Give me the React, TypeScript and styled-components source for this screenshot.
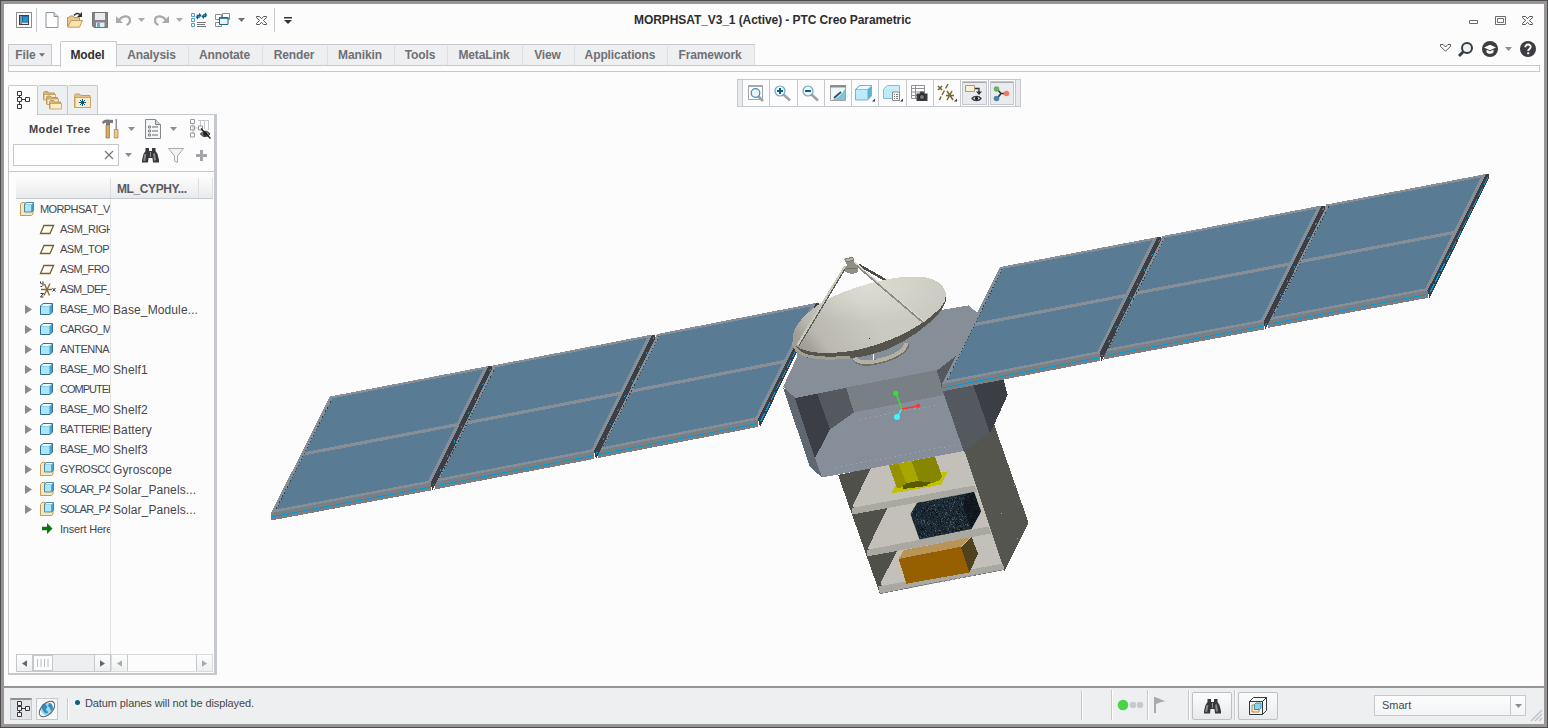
import React from 'react';
import styled, { createGlobalStyle, css } from 'styled-components';

const GlobalStyle = createGlobalStyle`
  *, *::before, *::after { box-sizing: border-box; }
  body {
    margin: 0;
    background: #fcfcfc;
    font-family: "Liberation Sans", Arial, sans-serif;
    font-size: 12px;
    color: #45474c;
  }
  svg { display: block; flex: none; overflow: visible; }
`;

const LINE = '#c5c9cd';

const Outer = styled.div`
  width: 1548px;
  height: 728px;
  padding: 1px;
  background: #4f4c4d;
`;
const Frame = styled.div`
  width: 100%;
  height: 100%;
  border: 3px solid #989596;
  background: #fcfcfc;
  display: flex;
  flex-direction: column;
`;

/* ---------- title bar ---------- */
const TitleBar = styled.header`
  height: 32px;
  flex: none;
  display: flex;
  align-items: center;
`;
const QuickAccess = styled.div`
  width: 630px;
  display: flex;
  align-items: center;
`;
const Spot = styled.span<{ $gap?: number; $up?: number }>`
  display: inline-flex;
  flex: none;
  margin-left: ${p => p.$gap ?? 0}px;
  margin-bottom: ${p => p.$up ?? 0}px;
`;
const Divider = styled.span<{ $gap?: number; $h?: number }>`
  flex: none;
  width: 1px;
  height: ${p => p.$h ?? 24}px;
  margin-left: ${p => p.$gap ?? 0}px;
  background: ${LINE};
`;
const Title = styled.h1`
  margin: 0;
  flex: 1;
  font-size: 12px;
  line-height: 16px;
  font-weight: bold;
  letter-spacing: -0.08px;
  color: #2d2d30;
  white-space: nowrap;
`;
const WindowButtons = styled.div`
  display: flex;
  align-items: center;
  gap: 16px;
  margin-right: 11px;
`;

/* ---------- ribbon ---------- */
const RibbonTabs = styled.nav`
  height: 30px;
  flex: none;
  display: flex;
  align-items: flex-end;
  padding: 0 0 0 4px;
`;
const tabBase = css`
  display: flex;
  align-items: center;
  justify-content: center;
  font-weight: bold;
  letter-spacing: -0.1px;
  color: #707075;
  white-space: nowrap;
`;
const FileTab = styled.div`
  ${tabBase}
  width: 44px;
  height: 22px;
  gap: 3px;
  padding-bottom: 1px;
  border: 1px solid ${LINE};
  border-bottom: 0;
  background: #eeeff1;
`;
const ActiveTab = styled.div`
  ${tabBase}
  width: 57px;
  height: 26px;
  margin: 0 0 -1px 8px;
  padding: 0 2px 0 0;
  border: 1px solid ${LINE};
  border-bottom: 0;
  border-radius: 2px 2px 0 0;
  background: #fcfcfc;
  color: #2f2f33;
  z-index: 1;
`;
const Tab = styled.div<{ $w: number }>`
  ${tabBase}
  width: ${p => p.$w}px;
  height: 22px;
  padding: 0 2px 1px 0;
  border-top: 1px solid ${LINE};
  border-right: 1px solid #dddfe2;
  background: #eeeff1;
  &:last-of-type { border-right-color: ${LINE}; }
`;
const RibbonTools = styled.div`
  margin-left: auto;
  margin-right: 8px;
  height: 34px;
  display: flex;
  align-items: center;
`;
const RibbonBody = styled.div`
  height: 7px;
  flex: none;
  margin: -1px 4px 0;
  border: 1px solid ${LINE};
`;

/* ---------- workspace ---------- */
const Workspace = styled.main`
  flex: 1;
  min-height: 0;
  display: flex;
`;
const Sidebar = styled.aside`
  width: 213px;
  flex: none;
  display: flex;
  flex-direction: column;
  padding: 13px 0 11px 4px;
`;
const SideTabs = styled.div`
  display: flex;
  height: 30px;
  flex: none;
  z-index: 1;
`;
const SideTab = styled.div<{ $active?: boolean }>`
  width: 30px;
  height: ${p => (p.$active ? 30 : 29)}px;
  padding-bottom: ${p => (p.$active ? 2 : 0)}px;
  border: 1px solid ${LINE};
  border-bottom: 0;
  border-left-width: ${p => (p.$active ? 1 : 0)}px;
  border-radius: 2px 2px 0 0;
  background: ${p => (p.$active ? '#fcfcfc' : '#eeeff1')};
  display: flex;
  align-items: center;
  justify-content: center;
`;
const TreePanel = styled.section`
  flex: 1;
  margin-top: -1px;
  border: 1px solid ${LINE};
  border-right-width: 3px;
  border-bottom-width: 2px;
  display: flex;
  flex-direction: column;
`;
const TreeTools = styled.div`
  height: 28px;
  display: flex;
  align-items: center;
`;
const TreeTitle = styled.span`
  width: 73px;
  margin-left: 20px;
  font-weight: bold;
  font-size: 11px;
  letter-spacing: 0.4px;
  white-space: nowrap;
  color: #404247;
`;
const SearchRow = styled.div`
  height: 29px;
  display: flex;
  align-items: center;
  padding: 0 0 4px 4px;
  border-bottom: 1px solid ${LINE};
`;
const SearchBox = styled.div`
  width: 106px;
  height: 22px;
  border: 1px solid ${LINE};
  background: #fff;
  display: flex;
  align-items: center;
  justify-content: flex-end;
  padding-right: 5px;
`;
const Grid = styled.div`
  flex: 1;
  margin: 6px 1px 0 7px;
  display: flex;
  flex-direction: column;
`;
const GridHead = styled.div`
  height: 21px;
  display: grid;
  grid-template-columns: 95px 88px 1fr;
  grid-template-rows: 20px;
  background: linear-gradient(#fcfcfc, #e9eaed);
  border-bottom: 1px solid ${LINE};
`;
const HeadCell = styled.div`
  border-right: 1px solid #dcdfe1;
  padding-left: 6px;
  font-weight: bold;
  line-height: 23px;
  letter-spacing: -0.4px;
  color: #595b61;
`;
const Rows = styled.div`
  flex: 1;
  background: linear-gradient(to right, transparent 94px, #e3e5e7 94px, #e3e5e7 95px, transparent 95px);
`;
const Row = styled.div`
  height: 20px;
  display: grid;
  grid-template-columns: 94px 1fr;
  grid-template-rows: 20px;
`;
const NameCell = styled.div<{ $root?: boolean }>`
  display: flex;
  align-items: center;
  overflow: hidden;
  font-size: 11px;
  white-space: nowrap;
  padding-left: ${p => (p.$root ? 4 : 9)}px;
`;
const Expander = styled.span`
  width: 15px;
  flex: none;
`;
const NodeIcon = styled.span`
  width: 20px;
  flex: none;
`;
const NodeName = styled.span<{ $spacing?: number }>`
  letter-spacing: ${p => p.$spacing ?? -0.5}px;
  font-kerning: none;
`;
const ParamCell = styled.div`
  padding-left: 3px;
  line-height: 22px;
  letter-spacing: 0.12px;
  white-space: nowrap;
`;
const ScrollBars = styled.div`
  height: 18px;
  display: flex;
  margin-bottom: 1px;
`;
const ScrollBar = styled.div<{ $w: number; $filled?: boolean }>`
  width: ${p => p.$w}px;
  border: 1px solid ${p => (p.$filled ? LINE : '#d9dcdf')};
  background: ${p => (p.$filled ? '#eeeff1' : '#fcfcfc')};
  display: flex;
  justify-content: space-between;
`;
const ScrollEnd = styled.span<{ $side: 'l' | 'r' }>`
  width: 16px;
  background: linear-gradient(#fdfdfd, #eeeff1);
  border: 0 solid ${LINE};
  border-right-width: ${p => (p.$side === 'l' ? 1 : 0)}px;
  border-left-width: ${p => (p.$side === 'r' ? 1 : 0)}px;
  display: flex;
  align-items: center;
  justify-content: center;
`;
const Thumb = styled.span`
  width: 20px;
  margin-right: auto;
  background: #fcfcfc;
  border: 1px solid ${LINE};
  display: flex;
  align-items: center;
  justify-content: center;
`;

const Viewport = styled.section`
  position: relative;
  flex: 1;
  overflow: hidden;
`;
const ViewToolbar = styled.div`
  position: absolute;
  left: 520px;
  top: 7px;
  width: 284px;
  height: 28px;
  border: 1px solid ${LINE};
  background: #fcfcfc;
  display: flex;
`;
const Grip = styled.span`
  width: 5px;
  background: #e8eaee;
  border-right: 1px solid ${LINE};
  &:last-child { border-right: 0; width: 4px; }
`;
const ViewButton = styled.span<{ $pressed?: boolean }>`
  flex: 1;
  padding-right: 1px;
  border-right: 1px solid ${LINE};
  display: flex;
  align-items: center;
  justify-content: center;
  ${p => p.$pressed && css`
    background: #e9ebef;
    box-shadow: inset 0 0 0 1px #fcfcfc, inset 0 0 0 2px ${LINE}, inset 0 3px 0 0 #a8a9ac;
  `}
`;

/* ---------- status bar ---------- */
const StatusBar = styled.footer`
  height: 38px;
  flex: none;
  border-top: 2px solid #989596;
  background: #eeeff1;
  display: flex;
  align-items: flex-start;
`;
const ToggleButton = styled.span<{ $down?: boolean; $gap: number }>`
  width: 22px;
  height: 22px;
  margin: 10px 0 0 ${p => p.$gap}px;
  padding: ${p => (p.$down ? '0 0 2px 4px' : '0 0 1px')};
  border: 1px solid ${LINE};
  border-top: ${p => (p.$down ? '2px solid #8f9093' : `1px solid ${LINE}`)};
  background: ${p => (p.$down ? '#e2e4e8' : '#f6f7f8')};
  display: flex;
  align-items: center;
  justify-content: center;
`;
const StatusRule = styled.span<{ $gap: number; $top?: number; $h?: number }>`
  width: 2px;
  height: ${p => p.$h ?? 30}px;
  margin: ${p => p.$top ?? 2}px 0 0 ${p => p.$gap}px;
  border-left: 1px solid ${LINE};
  background: #fff;
  flex: none;
`;
const Message = styled.div`
  display: flex;
  width: 1006px;
  margin: 8px 0 0 5px;
  font-size: 11px;
  line-height: 15px;
  letter-spacing: -0.1px;
  white-space: nowrap;
`;
const Bullet = styled.span`
  width: 5px;
  height: 5px;
  margin: 4px 5px 0 1px;
  border-radius: 50%;
  background: #0d5e82;
`;
const StatusSpot = styled.span<{ $gap: number; $top: number }>`
  margin: ${p => p.$top}px 0 0 ${p => p.$gap}px;
`;
const StatusButton = styled.span<{ $gap: number }>`
  width: 40px;
  height: 28px;
  flex: none;
  margin: 4px 0 0 ${p => p.$gap}px;
  border: 1px solid #bcc0c5;
  border-radius: 2px;
  background: linear-gradient(#fcfcfc, #e8eaed);
  display: flex;
  align-items: center;
  justify-content: center;
`;
const Select = styled.div`
  width: 152px;
  height: 21px;
  flex: none;
  margin: 7px 0 0 96px;
  border: 1px solid ${LINE};
  background: linear-gradient(#fdfdfd, #f3f4f5);
  display: flex;
  font-size: 11px;
  line-height: 19px;
  padding-left: 7px;
  justify-content: space-between;
`;
const SelectArrow = styled.span`
  width: 15px;
  border-left: 1px solid ${LINE};
  display: flex;
  align-items: center;
  justify-content: center;
`;

/* ---------- icons ---------- */
const Caret = ({ c = '#8d8d90', w = 7 }: { c?: string; w?: number }) => (
  <svg width={w} height="4" viewBox="0 0 8 4.5"><path d="M0 0h8L4 4.5z" fill={c} /></svg>
);
const AppIcon = () => (
  <svg width="16" height="16" shapeRendering="crispEdges">
    <path d="M.5.5h15v15H.5z" fill="#fff" stroke="#8c8c90" />
    <path d="M3 3h10v10H3z" fill="#3c3e42" />
    <path d="M4 4h8v8H4z" fill="#dfe3e8" />
    <path d="M4 4h2v8H4z" fill="#8b9197" />
    <path d="M6 4h6v6H6z" fill="#1597dc" stroke="#24597e" strokeWidth=".6" />
  </svg>
);
const NewIcon = () => (
  <svg width="14" height="16"><path d="M1 .5h8l4 4v11H1z" fill="#fff" stroke="#8b949e" /><path d="M9 .5v4h4" fill="#d3dae2" stroke="#8b949e" /></svg>
);
const OpenIcon = () => (
  <svg width="16" height="16">
    <path d="M.5 14.500V5.500h1.500l1-1.500h3l1 1.500h5.500V9" fill="#e9c990" stroke="#bd9650" />
    <path d="M.8 15.200L4 8.500h11.500l-3 6.700z" fill="#fbe3b0" stroke="#c39b58" />
    <path d="M7 3.500C9 .8 11 1 13 2.500" fill="none" stroke="#333" strokeWidth="1.500" /><path d="M15 0v5h-5z" fill="#333" />
  </svg>
);
const SaveIcon = () => (
  <svg width="16" height="16">
    <path d="M.5.500h15v15H2l-1.500-1.500z" fill="#848488" stroke="#737377" /><path d="M3 1h10v7H3z" fill="#e9ebed" />
    <path d="M4 10.500h8.500V15H4z" fill="#e4eef5" /><path d="M5 11h3v4H5z" fill="#5fb1d8" />
  </svg>
);
const UndoIcon = ({ flip }: { flip?: boolean }) => (
  <svg width="16" height="12"><g transform={flip ? 'matrix(-1 0 0 1 16 0)' : undefined}>
    <path d="M3 6C7 1 14 1 14 6.500c0 2-1 3.500-3.500 4.500" fill="none" stroke="#a9a9ac" strokeWidth="2.200" />
    <path d="M0 2v7h7z" fill="#a9a9ac" />
  </g></svg>
);
const RegenIcon = () => (
  <svg width="16" height="16" fill="none">
    <path d="M.500 1.500h3v3h-3zM.500 6.500h3v3h-3zM.500 11.500h3v3h-3z" stroke="#4ba3cb" />
    <path d="M6 10.500h9M6 12.500h8M6 14.500h9" stroke="#77777b" strokeWidth="1" />
    <path d="M6.500 5.500v-2h2M14.500 2.500v2h-2" stroke="#105f83" strokeWidth="1.600" />
    <path d="M8 .800v5.400l2.600-2.700zM13 1.800v5.400l-2.600-2.700zM4.500 4.500h4L6.500 7.500zM12.500 3.500h4L14.500 .5z" fill="#105f83" />
  </svg>
);
const WindowsIcon = () => (
  <svg width="16" height="15" fill="#fff" stroke="#8a8c90">
    <path d="M7.500.500h7v6h-7zM.500 1.500h6v5h-6zM.500 9.500h6v4h-6z" /><path d="M4.500 4.500h8.500v7H4.500z" fill="#e6f3fa" stroke="#1c6a8c" /><path d="M4 4h9.500v1.800H4z" fill="#1c6a8c" stroke="none" />
  </svg>
);
const CrossIcon = ({ w = 11 }: { w?: number }) => (
  <svg width={w} height="9" viewBox="0 0 11 9">
    <path d="M.500.500h3l2 2.200 2-2.200h3v1.200L7.300 4.500l3.200 2.800v1.200h-3l-2-2.200-2 2.200h-3V7.300l3.200-2.800L.500 1.700z" fill="#fff" stroke="#55565a" />
  </svg>
);
const MinIcon = () => <Spot $up={-4}><svg width="10" height="4"><path d="M.500.500h8v3h-8z" fill="#fff" stroke="#6a6b6f" /></svg></Spot>;
const MaxIcon = () => <svg width="11" height="9" fill="#fff" stroke="#6a6b6f"><path d="M.500.500h10v8h-10z" /><path d="M2.500 2.500h6v4h-6z" /></svg>;
const CollapseIcon = () => <svg width="11" height="8"><path d="M.500.500h2.500l2.500 2.500L8 .500h2.500v1.800l-5 5-5-5z" fill="#fff" stroke="#55565a" /></svg>;
const FindIcon = () => (
  <svg width="15" height="15"><circle cx="9" cy="6" r="5" fill="#e8f2f7" stroke="#3a3b3e" strokeWidth="2" /><path d="M1 14l4.500-4.500" stroke="#3a3b3e" strokeWidth="2.800" /></svg>
);
const LearnIcon = () => (
  <svg width="16" height="16"><circle cx="8" cy="8" r="8" fill="#3c3d40" /><path d="M2 6.500l6-2.700 6 2.700-6 2.700z" fill="#fcfcfc" /><path d="M4.500 8.800v2.400c1.500 2 5.500 2 7 0V8.800L8 10.300z" fill="#fcfcfc" /></svg>
);
const HelpIcon = () => (
  <svg width="16" height="16"><circle cx="8" cy="8" r="8" fill="#3c3d40" /><path d="M5.300 6.200c0-3.700 5.600-3.400 5.400-.2C10.600 8 8.200 7.800 8.200 10" fill="none" stroke="#fff" strokeWidth="1.900" /><path d="M7.200 11.300h2v2h-2z" fill="#fff" /></svg>
);
const TreeIcon = ({ c = '#37383c', fill = '#fcfcfc', h = 18 }) => (
  <svg width="13" height={h} fill={fill} stroke={c}>
    <path d={`M2.500 4v${h - 8}M5 ${Math.floor(h / 2) - 0.5}h4`} />
    <path d={`M.500.500h4v4h-4zM.500 ${Math.floor(h / 2) - 2.5}h4v4h-4zM.500 ${h - 4.5}h4v4h-4zM8.500 ${Math.floor(h / 2) - 2.5}h4v4h-4z`} />
  </svg>
);
const folder = (x: number, y: number) => (
  <g transform={`translate(${x} ${y})`}><path d="M.500 8.500v-7l1-1h3l1 1.500h6v6.500z" fill="#d9b778" stroke="#b18a4b" strokeWidth=".8" /><path d="M1 3.500h11.500v5.500H1z" fill="#faebc9" stroke="#c19a5a" strokeWidth=".8" /></g>
);
const FoldersIcon = () => <svg width="19" height="19">{folder(0, 0)}{folder(3, 4.500)}{folder(6, 9)}</svg>;
const FavIcon = () => (
  <svg width="17" height="15"><path d="M.500 14.500v-12l1-1.500h4l1.500 1.500h9v12z" fill="#e0c28a" stroke="#c19a5a" /><path d="M1 4.500h15.500v10H1z" fill="#faebc9" stroke="#c9a567" /><path d="M8.500 6v7M5 9.500h7M6 7l5 5M11 7l-5 5" stroke="#0d5e82" /></svg>
);
const ToolsIcon = () => (
  <svg width="17" height="20">
    <path d="M0 3c2-3 5-3 11-2v3H8V6H4V3.500L1 5z" fill="#77797d" /><path d="M4 6h3.500v13H4z" fill="#dba861" stroke="#9c7132" strokeWidth=".7" />
    <path d="M13.500 0h1.500v10h-1.500z" fill="#8f9196" /><path d="M12.300 10.500h3.700v8.500h-3.700z" fill="#efc98b" stroke="#a67a3b" strokeWidth=".7" />
  </svg>
);
const SettingsIcon = () => (
  <svg width="17" height="20"><path d="M.500.500h10l5 5v14H.500z" fill="#f4f7f9" stroke="#83888e" /><path d="M10.500.500v5h5" fill="#cdd5dc" stroke="#83888e" /><path d="M7 8h6M7 12h6M7 16h6" stroke="#68696d" /><path d="M3.500 7h2v2h-2zM3.500 11h2v2h-2zM3.500 15h2v2h-2z" fill="none" stroke="#68696d" strokeWidth=".8" /></svg>
);
const HideIcon = () => (
  <svg width="21" height="20" fill="none">
    <path d="M3 4v11M5 9h4M8 1.500h11M10.500 2v5M14.500 2v8M18.500 2v9" stroke="#c8c9cc" /><path d="M.500.500h4v4h-4zM.500 7h4v4h-4zM.500 14h4v4h-4zM8.500 7h4v4h-4z" stroke="#98999d" />
    <path d="M10.500 15c2.500-3.700 7-3.700 9.500 0-2.500 3.500-7 3.500-9.500 0z" fill="#77797d" stroke="#37383c" /><circle cx="15" cy="15" r="2" fill="#28282b" /><path d="M11 9.500l9.500 10" stroke="#161618" strokeWidth="1.200" />
  </svg>
);
const Binoculars = () => (
  <svg width="17" height="15">
    <path d="M3.500 0h3.500v3h3V0h3.500v3l2 3 1.500 6v2.500h-6L10.500 10h-4L6 14.500H0V12l1.500-6 2-3z" fill="#36373a" />
    <path d="M3.400 6l-1.200 7" stroke="#85878b" strokeWidth="2" /><path d="M12 5.500l1 7" stroke="#85878b" strokeWidth="2" /><path d="M8.500 4v5" stroke="#909296" />
  </svg>
);
const FilterIcon = () => <svg width="16" height="15"><path d="M.500.500h15L9.500 8v6.500L6.500 13V8z" fill="#f1f2f3" stroke="#aaabae" /></svg>;
const PlusIcon = () => <svg width="11" height="11"><path d="M5.500 0v11M0 5.500h11" stroke="#a3a4a7" strokeWidth="3" /></svg>;
const ClearIcon = () => <svg width="8" height="8"><path d="M0 0l8 8M8 0L0 8" stroke="#77787c" strokeWidth="1.200" /></svg>;
const Cube = ({ s = 13 }: { s?: number }) => (
  <svg width={s} height={s - 1} viewBox="0 0 13 12">
    <path d="M.500 3l2.500-2.500h9.500V9L10 11.500H.500z" fill="#3fa5d2" stroke="#38718d" /><path d="M1 3.300h8.500V11H1z" fill="#abe5fa" /><path d="M1.200 3l2.200-2h8.500l-2.200 2z" fill="#eaf9ff" />
  </svg>
);
const Assembly = () => (
  <svg width="14" height="14" viewBox="0 0 14 14">
    <path d="M.500 2.500l1.500-2h3v8.500h8v3l-1.500 1.500h-11z" fill="#fae6bd" stroke="#c29b5c" />
    <path d="M4.500 2.500l1.500-2h7.500v8l-2 1.500h-7z" fill="#3d9bc6" stroke="#387c9d" strokeWidth=".8" /><path d="M5 2.800h6.200v6.700H5z" fill="#abe5fa" /><path d="M5 2.500L6.500 1H13l-1.500 1.500z" fill="#eaf9ff" />
  </svg>
);
const Plane = () => <svg width="15" height="9"><path d="M4 .500h9.500l-3.500 8H.500z" fill="#fffdf6" stroke="#775e2c" strokeWidth="1.300" /></svg>;
const Csys = () => (
  <svg width="17" height="17" fill="none"><path d="M1 8.500h11M4.500 3l5 11.500M10 2.500L4 14.500" stroke="#836836" strokeWidth="1.300" /><path d="M.500.500v1.500l1 1h1M3 .500v4l-1 1H.500M12.500 7l3 3.500M15.500 7l-3 3.500M.500 12.500h3l-3 3.500h3" stroke="#333" /></svg>
);
const InsertArrow = () => <svg width="11" height="11"><path d="M0 3.800h5V0l5.500 5.500L5 11V7.200H0z" fill="#0e7410" /></svg>;
const Tri = ({ dir, s = 7, c = '#8a8a8d' }: { dir: 'l' | 'r'; s?: number; c?: string }) => (
  <svg width={s} height={s + 2} viewBox="0 0 7 9"><path d={dir === 'r' ? 'M0 0v9l7-4.500z' : 'M7 0v9L0 4.500z'} fill={c} /></svg>
);
const ThumbLines = () => <svg width="12" height="8"><path d="M.500 0v8M4 0v8M7.500 0v8M11 0v8" stroke="#bcbec1" /></svg>;

const Zoom = ({ sign }: { sign?: string }) => (
  <svg width="17" height="17"><path d="M9.500 9.500l6.500 6" stroke="#9fa2a7" strokeWidth="2.600" /><circle cx="6" cy="6" r="5" fill="#eef8fd" stroke="#6aa6c3" strokeWidth="1.200" />{sign && <path d={sign} stroke="#0d5e82" strokeWidth="2" />}</svg>
);
const Refit = () => (
  <svg width="17" height="17"><path d="M1.500.500h14v14h-14z" fill="#fff" stroke="#a3a5a9" /><path d="M1 0h15v2H1z" fill="#a8a9ac" /><path d="M11 11l5 5" stroke="#9fa2a7" strokeWidth="2.600" /><circle cx="8.500" cy="8" r="4.300" fill="#e7f5fb" stroke="#468dad" strokeWidth="1.300" /></svg>
);
const Repaint = () => (
  <svg width="16" height="16"><path d="M.500.500h15v15H.500z" fill="#eef8fc" stroke="#a3a5a9" /><path d="M0 0h16v2.500H0z" fill="#8a8c90" /><path d="M15 4v11H2C9 13 12 8 15 4z" fill="#7cc3e0" /><path d="M4 13l7-6" stroke="#354d5b" strokeWidth="1.800" /></svg>
);
const Corner = () => <path d="M20 14.500v3h-3z" fill="#3a3b3e" />;
const DisplayStyle = () => (
  <svg width="19" height="18"><path d="M.500 5.500l4-4h12v10.500l-4 4H.500z" fill="#5fb1d4" stroke="#74b4d0" /><path d="M1 6h11.500v9.500H1z" fill="#bcebfb" /><path d="M1.500 5.200L4.800 2h11.400l-3.600 3.200z" fill="#eefaff" /><Corner /></svg>
);
const SavedViews = () => (
  <svg width="19" height="18"><path d="M.500 5l4-3.500h12v8l-4 5H.500z" fill="#cdeefa" stroke="#86bcd2" /><path d="M1 5h11.500v9H1z" fill="#bcebfb" /><path d="M9.500 8h7v8.500h-7z" fill="#f7f7f7" stroke="#86888c" /><path d="M11 10.500h1M13 10.500h2M11 12.500h1M13 12.500h2M11 14.500h1M13 14.500h2" stroke="#77797d" /><Corner /></svg>
);
const ViewManager = () => (
  <svg width="17" height="17" fill="none"><path d="M.500.500h13v13H.500zM.500 3.500h13M.500 7h13M.500 10.500h13M4.500 0v14" stroke="#909296" /><path d="M5.500 8.500h3l1-2h3l1 2h3v7.500h-11z" fill="#3a3b3e" /><circle cx="11" cy="12" r="2.600" fill="#77797d" stroke="#1f2022" /></svg>
);
const DatumFilter = () => (
  <svg width="19" height="18" stroke="#7c642f" strokeWidth="1.500"><path d="M1 2l4 4M5 2L1 6M11 0L8.500 4.500M7.500 6.500L5 11M4 12.500L2.500 16M9 11.500h8M10 7l6 9M15 7l-5 9" /><path d="M20 14.500v3h-3z" fill="#3a3b3e" stroke="none" /></svg>
);
const Annotations = () => (
  <svg width="18" height="17"><path d="M.500.500h9v6h-9z" fill="#faf1d2" stroke="#a89c78" /><path d="M10 3.500h4v5" fill="none" stroke="#333" strokeWidth="1.300" /><path d="M11 6.500h6l-3 3.500z" fill="#333" /><path d="M7 13.500c2-2.800 7-2.800 9 0-2 2.700-7 2.700-9 0z" fill="#fff" stroke="#3a3b3e" strokeWidth="1.300" /><circle cx="11.500" cy="13.500" r="1.700" fill="#222" /></svg>
);
const SpinCenter = () => (
  <svg width="17" height="17"><path d="M3.500 3.500L8 8.500l-4 5M8 8.500h5" fill="none" stroke="#333" strokeWidth="1.600" /><circle cx="3.500" cy="4" r="2.800" fill="#6cae68" /><circle cx="3.500" cy="13.500" r="2.800" fill="#4a83ac" /><circle cx="13.500" cy="8.500" r="2.800" fill="#ee7a6e" /></svg>
);
const Globe = () => (
  <svg width="18" height="18"><circle cx="9" cy="9" r="6.500" fill="#9bd7f0" /><path d="M4 5c3-3 4 0 5 1s-1 3-1 4 2 1 2 2-2 2-3 1-4-4-3-8zM11 3c3 0 4 3 4 6l-2 2-1-3-2-2z" fill="#2f8fc4" /><ellipse cx="9" cy="9" rx="9.500" ry="5.500" transform="rotate(-45 9 9)" fill="none" stroke="#606368" strokeWidth="1" /></svg>
);
const Flag = () => <svg width="12" height="16"><path d="M1 0v16" stroke="#a9aaad" strokeWidth="2" /><path d="M1 .500c4 0 6 3 11 3.500-4 1-7 1-11 4z" fill="#a9aaad" /></svg>;
const Lights = () => (
  <svg width="26" height="12"><circle cx="6" cy="6" r="5.300" fill="#4bd348" /><circle cx="16" cy="6" r="3.200" fill="#c9cacc" /><circle cx="23" cy="6" r="3.200" fill="#c9cacc" /></svg>
);
const BoxSelect = () => (
  <svg width="18" height="18" fill="none"><path d="M.500 4.500l4-4h13v13l-4 4H.500zM.500 4.500h13v13M13.500 4.500l4-4" stroke="#36373a" /><path d="M3 8h2.500v4.500h4.500V15H3z" fill="#fae6bd" stroke="#bb8e41" /><path d="M5.500 7.500l1.500-1.500h5v5l-1.500 1.500h-5z" fill="#8ed3ef" stroke="#418fb1" /></svg>
);
const ResizeGrip = () => <svg width="12" height="12"><path d="M1 12L12 1M5 12l7-7M9 12l3-3" stroke="#bfc1c4" strokeWidth="1.300" /></svg>;

/* ---------- 3D model drawing ---------- */
type Pt = [number, number];
type Quad = { tl: Pt; tr: Pt; br: Pt; bl: Pt };
const mix = (a: Pt, b: Pt, t: number): Pt => [a[0] + (b[0] - a[0]) * t, a[1] + (b[1] - a[1]) * t];
const pts = (...p: Pt[]) => p.map(q => q.join(',')).join(' ');

function SolarPanel({ tl, tr, br, bl, outer }: Quad & { outer?: boolean }) {
  const at = (u: number, v: number) => mix(mix(tl, tr, u), mix(bl, br, u), v);
  const cell = (v0: number, v1: number) => pts(at(0.024, v0), at(0.976, v0), at(0.976, v1), at(0.024, v1));
  const down = (p: Pt, dy: number, dx = 0): Pt => [p[0] + dx, p[1] + dy];
  return (
    <g>
      <polygon points={pts(tr, down(tr, 0, 3), down(tr, 4, 3), down(br, 7.5, 2), br)} fill="#3b3e44" />
      <polyline
        points={pts(down(tr, 3, 2), down(br, 4, 1.5))}
        stroke="#0799d2"
        strokeDasharray={outer ? '9 3' : '2 14'}
        fill="none"
      />
      <polygon points={pts(bl, br, down(br, 7.5), down(bl, 7.5))} fill="#788085" />
      <polygon points={pts(tl, tr, br, bl)} fill="#868e97" />
      <polyline points={pts(down(bl, 4), down(br, 4))} stroke="#0799d2" fill="none" strokeWidth="1" />
      <polygon points={cell(0.022, 0.482)} fill="#5a7b94" />
      <polygon points={cell(0.513, 0.976)} fill="#5a7b94" />
      <polyline points={pts(at(0.022, 0.022), at(0.022, 0.972))} stroke="#34414e" strokeDasharray="1.200 2.200" fill="none" />
    </g>
  );
}

const leftWing: Quad[] = [
  { tl: [657, 334], tr: [816, 303], br: [758, 419.500], bl: [598, 450.500] },
  { tl: [493, 365.500], tr: [652, 334.500], br: [594, 451.500], bl: [434.500, 482] },
  { tl: [330, 396.500], tr: [488.500, 366], br: [430.500, 483], bl: [271, 513] },
];
const rightWing: Quad[] = [
  { tl: [1326.500, 204.500], tr: [1486, 174], br: [1427.500, 290.500], bl: [1267.500, 320.500] },
  { tl: [1162.500, 236], tr: [1321.500, 205.500], br: [1263.500, 322], bl: [1103.500, 352] },
  { tl: [1000, 267], tr: [1157.500, 237], br: [1099.500, 353.500], bl: [942, 384] },
];

const grain = (() => {
  let seed = 7;
  const rnd = () => ((seed = (seed * 16807) % 2147483647) / 2147483647);
  const tones = ['#33424f', '#0c141b', '#293b49', '#4a5864', '#0a0f14', '#20323f'];
  return Array.from({ length: 1500 }, () => ({ x: 910 + Math.floor(rnd() * 72), y: 491 + Math.floor(rnd() * 50), c: tones[Math.floor(rnd() * 6)] }));
})();

const Satellite = () => (
  <svg width="1327" height="614" viewBox="217 72 1327 614" shapeRendering="crispEdges">
    <defs>
      <linearGradient id="dish" x1="0" y1="0.700" x2="1" y2="0.300">
        <stop offset="0" stopColor="#a19f95" /><stop offset=".12" stopColor="#bbb9af" /><stop offset=".5" stopColor="#cbcac0" /><stop offset="1" stopColor="#cccbc1" />
      </linearGradient>
      <radialGradient id="shine" cx=".5" cy=".12" r=".5"><stop offset="0" stopColor="#deddd3" /><stop offset="1" stopColor="#deddd3" stopOpacity="0" /></radialGradient>
      <clipPath id="computer"><polygon points="917,503 974,492 981,511.500 971.500,529 919.500,539.500 910.500,514" /></clipPath>
    </defs>
    {leftWing.map((p, i) => <SolarPanel key={i} outer={i === 0} {...p} />)}

    {/* equipment bay */}
    <polygon points="838,475 964,450 1004.500,569 880,594" fill="#c2c0b8" />
    <polygon points="964,450 990,432 994,424 1028.500,522.500 1004.500,570.500" fill="#54554e" />
    <g fill="#4f504a">
      <polygon points="838,475 871,468 851.500,508" /><polygon points="852,514 887.500,507.500 866.500,551" /><polygon points="867,556 897,551 878.500,587" />
      <polygon points="838,475 880,594 882,586 842,475" />
    </g>
    <g fill="#a9a8a1">
      <polygon points="851.500,508 974,485.500 977,491.500 852.500,514.500" /><polygon points="866.500,550 988.500,526.500 991,533.500 867,556.500" /><polygon points="878.500,586.500 1003,563.500 1004.500,570 880,594" />
    </g>
    <path d="M880 593.500L1004 569.500" stroke="#74787a" strokeDasharray="3 2" />
    <path d="M1013.500 485.500h1M1000.500 513.500h1M1016.500 538.500h1" stroke="#a9a8a1" />

    {/* gyroscope */}
    <polygon points="891.500,493.500 941,484.700 947.700,471.300 940,473 896,484" fill="#c3c200" />
    <polygon points="889,465.500 899,463 907,483.500 903,487 897,488.500" fill="#969100" />
    <polygon points="898.500,463.500 912,461 919,481.500 906.500,484" fill="#a8a700" />
    <polygon points="911.500,461 935,456.500 942,476 940,480 931,483.500 919,481.500" fill="#878600" />
    <polygon points="902.500,486 907,483 917,481 931,482.500 926.500,486 903.500,489" fill="#5c5a00" />

    {/* flight computer */}
    <g clipPath="url(#computer)">
      <path d="M909 490h74v51h-74z" fill="#1b2731" />
      {grain.map((g, i) => <rect key={i} x={g.x} y={g.y} width="1" height="1" fill={g.c} />)}
      <polygon points="966,494 974,492 981,511.500 971.500,529 963,507" fill="#0a1016" opacity=".65" />
    </g>

    {/* battery */}
    <polygon points="898.500,559 904,550 970.500,537.300 961,547" fill="#b89456" />
    <polygon points="898.500,559 961,546.700 969.500,572.500 906.500,583.700" fill="#965f00" />
    <polygon points="961,547 971.700,537.300 978,553.500 969.500,572.500" fill="#51421f" />

    {/* base module */}
    <polygon points="783,387 797,357 800,336 941,310 969,305.300 990,325 952,360 937,371 795,398" fill="#868e97" />
    <polygon points="782.700,387 795,397.500 822,477.500 810,467" fill="#5f6871" />
    <polygon points="795,398 817.500,393.500 830,429.500 815,458" fill="#3b3e44" />
    <polygon points="817.300,393.700 846,388 854.500,412.500 830,429.500" fill="#54585f" />
    <polygon points="846,387.500 937,370 945,396 854,413" fill="#788085" />
    <polygon points="936.700,370.700 956,356 950,386 942,387" fill="#54585f" />
    <polygon points="854,412.300 944,395 964,451 822,477.500 815,458 830,429.500" fill="#868e99" />
    <polygon points="941,386 973,383 990,433 963.500,451" fill="#54585f" />
    <polygon points="972.500,383 1003,378 1007.700,394.700 994,425 990,433" fill="#3b3e44" />
    <path d="M860 419.500L938 404.500M836 467.500L958 444.500" stroke="#a3abb2" strokeDasharray="1 4" />

    {rightWing.map((p, i) => <SolarPanel key={i} outer={i === 0} {...p} />)}

    {/* antenna */}
    <path d="M854 357c3 8 16 7 27 4 12-3 25-9 26-17" fill="none" stroke="#6f6c63" strokeWidth="5" />
    <path d="M854 357c3 7 16 6 27 3 12-3 25-9 25-17" fill="none" stroke="#b3b0a5" strokeWidth="4" />
    <path d="M873.500 353v7" stroke="#fff" /><path d="M873.500 359.500h2" stroke="#0799d2" />
    <path d="M859 265l28 16" stroke="#4b4b44" strokeWidth="2.500" />
    <path d="M792.500 338c0 12 6 17 15 19.500 14 3 40 2 60-2 24-5 46-19 61-32 12-10 19-19 18-31z" fill="#54544c" />
    <path d="M793 342c2 9 8 13 17 14.500 10 2 26 2 40 .5" fill="none" stroke="#a19e92" strokeWidth="3" />
    <path d="M793 341c-4-14 19-37 48-48 23-9 42-14 62-16 23-2 40 2 43 17 1 10-9 18-22 28-18 12-42 23-67 28-24 5-60 5-64-9z" fill="url(#dish)" />
    <path d="M793 341c-4-14 19-37 48-48 23-9 42-14 62-16 23-2 40 2 43 17 1 10-9 18-22 28-18 12-42 23-67 28-24 5-60 5-64-9z" fill="url(#shine)" />
    <path d="M846 266L798.500 345" stroke="#5d5b52" strokeWidth="2.600" /><path d="M845 266L797.500 345" stroke="#cbc9be" strokeWidth="2" />
    <path d="M854 263L923 322" stroke="#8d8b81" strokeWidth="2.400" /><path d="M854.500 262L923.500 321" stroke="#dad8ce" strokeWidth="1.300" />
    <path d="M844.500 258.500l8-2 2 5-1 2 4.500 3.500v5l-6 2-7-2v-5l2-2z" fill="#918f85" /><path d="M844.500 259l8-2 1.500 3-8 2zM846 268l11 1" fill="#b8b5aa" stroke="#6b695f" strokeWidth=".7" />
    <path d="M869 338.500h1" stroke="#333" />

    {/* spin center */}
    <g shapeRendering="auto" strokeWidth="1.400">
      <path d="M901.700 409L896 393.500" stroke="#2ee62e" /><circle cx="895.700" cy="393.300" r="2.500" fill="#2ee62e" />
      <path d="M901.700 409l16.500-3" stroke="#ff3232" /><circle cx="918.300" cy="405.800" r="2" fill="#ff3232" />
      <path d="M901.700 409L897 417" stroke="#3cf7fb" /><circle cx="897" cy="417" r="3" fill="#3cf7fb" />
    </g>
  </svg>
);

/* ---------- data ---------- */
const tabs: [string, number][] = [
  ['Analysis', 72], ['Annotate', 74], ['Render', 65], ['Manikin', 67], ['Tools', 53], ['MetaLink', 75], ['View', 52], ['Applications', 93], ['Framework', 87],
];
type Kind = 'asm' | 'plane' | 'csys' | 'part' | 'insert';
const nodes: { name: string; kind: Kind; param?: string; open?: boolean; spacing?: number }[] = [
  { name: 'ASM_RIGH', kind: 'plane' },
  { name: 'ASM_TOP', kind: 'plane' },
  { name: 'ASM_FRO', kind: 'plane', spacing: -0.6 },
  { name: 'ASM_DEF_', kind: 'csys', spacing: -0.8 },
  { name: 'BASE_MO', kind: 'part', param: 'Base_Module...', open: true, spacing: -0.55 },
  { name: 'CARGO_M', kind: 'part', open: true, spacing: -0.6 },
  { name: 'ANTENNA', kind: 'part', open: true },
  { name: 'BASE_MO', kind: 'part', param: 'Shelf1', open: true, spacing: -0.55 },
  { name: 'COMPUTER', kind: 'part', open: true, spacing: -1 },
  { name: 'BASE_MO', kind: 'part', param: 'Shelf2', open: true, spacing: -0.55 },
  { name: 'BATTERIES', kind: 'part', param: 'Battery', open: true, spacing: -0.75 },
  { name: 'BASE_MO', kind: 'part', param: 'Shelf3', open: true, spacing: -0.55 },
  { name: 'GYROSCO', kind: 'asm', param: 'Gyroscope', open: true },
  { name: 'SOLAR_PA', kind: 'asm', param: 'Solar_Panels...', open: true, spacing: -0.8 },
  { name: 'SOLAR_PA', kind: 'asm', param: 'Solar_Panels...', open: true, spacing: -0.8 },
  { name: 'Insert Here', kind: 'insert', spacing: -0.2 },
];
const kindIcon: Record<Kind, React.ReactNode> = { asm: <Assembly />, plane: <Plane />, csys: <Csys />, part: <Cube />, insert: <Spot $gap={2}><InsertArrow /></Spot> };

export default function App() {
  return (
    <Outer>
      <GlobalStyle />
      <Frame>
        <TitleBar>
          <QuickAccess>
            <Spot $gap={12}><AppIcon /></Spot>
            <Divider $gap={4} />
            <Spot $gap={8}><NewIcon /></Spot>
            <Spot $gap={8}><OpenIcon /></Spot>
            <Spot $gap={9}><SaveIcon /></Spot>
            <Spot $gap={8}><UndoIcon /></Spot>
            <Spot $gap={6}><Caret c="#a9a9ac" /></Spot>
            <Spot $gap={8}><UndoIcon flip /></Spot>
            <Spot $gap={7}><Caret c="#a9a9ac" /></Spot>
            <Spot $gap={8}><RegenIcon /></Spot>
            <Spot $gap={8}><WindowsIcon /></Spot>
            <Spot $gap={7}><Caret c="#6f6f73" /></Spot>
            <Spot $gap={11}><CrossIcon /></Spot>
            <Divider $gap={7} />
            <Spot $gap={9}>
              <svg width="8" height="7"><path d="M0 0h8v1.500H0zM0 3h8L4 7z" fill="#333" /></svg>
            </Spot>
          </QuickAccess>
          <Title>MORPHSAT_V3_1 (Active) - PTC Creo Parametric</Title>
          <WindowButtons><MinIcon /><MaxIcon /><CrossIcon /></WindowButtons>
        </TitleBar>
        <RibbonTabs>
          <FileTab>File <Caret c="#6f6f73" w={6} /></FileTab>
          <ActiveTab>Model</ActiveTab>
          {tabs.map(([name, w]) => <Tab key={name} $w={w}>{name}</Tab>)}
          <RibbonTools>
            <Spot $up={2}><CollapseIcon /></Spot>
            <Spot $gap={7}><FindIcon /></Spot>
            <Spot $gap={9}><LearnIcon /></Spot>
            <Spot $gap={7}><Caret /></Spot>
            <Spot $gap={8}><HelpIcon /></Spot>
          </RibbonTools>
        </RibbonTabs>
        <RibbonBody />
        <Workspace>
          <Sidebar>
            <SideTabs>
              <SideTab $active><TreeIcon /></SideTab>
              <SideTab><FoldersIcon /></SideTab>
              <SideTab><FavIcon /></SideTab>
            </SideTabs>
            <TreePanel>
              <TreeTools>
                <TreeTitle>Model Tree</TreeTitle>
                <Spot><ToolsIcon /></Spot>
                <Spot $gap={9}><Caret /></Spot>
                <Spot $gap={10}><SettingsIcon /></Spot>
                <Spot $gap={8}><Caret /></Spot>
                <Spot $gap={13}><HideIcon /></Spot>
              </TreeTools>
              <SearchRow>
                <SearchBox><ClearIcon /></SearchBox>
                <Spot $gap={6}><Caret /></Spot>
                <Spot $gap={10}><Binoculars /></Spot>
                <Spot $gap={9}><FilterIcon /></Spot>
                <Spot $gap={12}><PlusIcon /></Spot>
              </SearchRow>
              <Grid>
                <GridHead><HeadCell /><HeadCell>ML_CYPHY...</HeadCell><HeadCell /></GridHead>
                <Rows>
                  <Row>
                    <NameCell $root><NodeIcon><Assembly /></NodeIcon><NodeName $spacing={-0.6}>MORPHSAT_V</NodeName></NameCell>
                  </Row>
                  {nodes.map((n, i) => (
                    <Row key={i}>
                      <NameCell>
                        <Expander>{n.open && <Tri dir="r" />}</Expander>
                        <NodeIcon>{kindIcon[n.kind]}</NodeIcon>
                        <NodeName $spacing={n.spacing}>{n.name}</NodeName>
                      </NameCell>
                      <ParamCell>{n.param}</ParamCell>
                    </Row>
                  ))}
                </Rows>
                <ScrollBars>
                  <ScrollBar $w={95} $filled>
                    <ScrollEnd $side="l"><Tri dir="l" s={5} c="#66676b" /></ScrollEnd>
                    <Thumb><ThumbLines /></Thumb>
                    <ScrollEnd $side="r"><Tri dir="r" s={5} c="#66676b" /></ScrollEnd>
                  </ScrollBar>
                  <ScrollBar $w={102}>
                    <ScrollEnd $side="l"><Tri dir="l" s={5} c="#a9aaad" /></ScrollEnd>
                    <ScrollEnd $side="r"><Tri dir="r" s={5} c="#a9aaad" /></ScrollEnd>
                  </ScrollBar>
                </ScrollBars>
              </Grid>
            </TreePanel>
          </Sidebar>
          <Viewport>
            <Satellite />
            <ViewToolbar>
              <Grip />
              <ViewButton><Refit /></ViewButton>
              <ViewButton><Zoom sign="M6 3v6M3 6h6" /></ViewButton>
              <ViewButton><Zoom sign="M3 6h6" /></ViewButton>
              <ViewButton><Repaint /></ViewButton>
              <ViewButton><DisplayStyle /></ViewButton>
              <ViewButton><SavedViews /></ViewButton>
              <ViewButton><ViewManager /></ViewButton>
              <ViewButton><DatumFilter /></ViewButton>
              <ViewButton $pressed><Annotations /></ViewButton>
              <ViewButton $pressed><SpinCenter /></ViewButton>
              <Grip />
            </ViewToolbar>
          </Viewport>
        </Workspace>
        <StatusBar>
          <ToggleButton $down $gap={6}><TreeIcon fill="#eeeff1" h={16} /></ToggleButton>
          <ToggleButton $gap={4}><Globe /></ToggleButton>
          <StatusRule $gap={9} $top={10} $h={22} />
          <Message><Bullet />Datum planes will not be displayed.</Message>
          <StatusRule $gap={1} />
          <StatusRule $gap={28} />
          <StatusSpot $gap={4} $top={11}><Lights /></StatusSpot>
          <StatusRule $gap={4} />
          <StatusSpot $gap={5} $top={9}><Flag /></StatusSpot>
          <StatusRule $gap={22} />
          <StatusButton $gap={2}><Binoculars /></StatusButton>
          <StatusRule $gap={2} />
          <StatusButton $gap={2}><BoxSelect /></StatusButton>
          <Select>Smart<SelectArrow><Caret /></SelectArrow></Select>
          <StatusSpot $gap={4} $top={21}><ResizeGrip /></StatusSpot>
        </StatusBar>
      </Frame>
    </Outer>
  );
}
